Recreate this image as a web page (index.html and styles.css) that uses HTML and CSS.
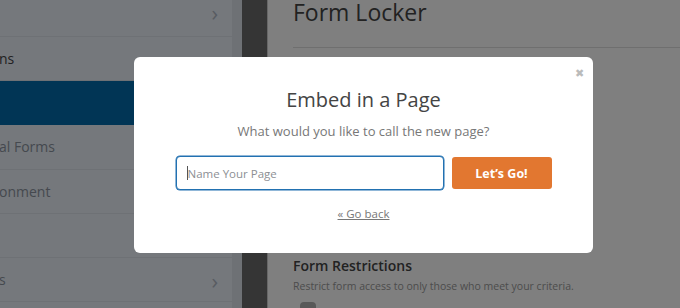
FILE: index.html
```html
<!DOCTYPE html>
<html>
<head>
<meta charset="utf-8">
<link rel="stylesheet" href="styles.css">
</head>
<body>
<div class="page">
  <aside class="sidebar">
    <div class="sb-row first"><span class="sb-label"></span><span class="chev">&#8250;</span></div>
    <div class="sb-row"><span class="sb-label dark">ns</span><span class="chev">&#8250;</span></div>
    <div class="sb-row active"></div>
    <div class="sb-row"><span class="sb-label">al Forms</span></div>
    <div class="sb-row"><span class="sb-label">onment</span></div>
    <div class="sb-row"><span class="sb-label"></span></div>
    <div class="sb-row"><span class="sb-label">s</span><span class="chev">&#8250;</span></div>
  </aside>
  <div class="sb-strip"></div>
  <div class="toggle"></div>
  <main class="main">
    <h1 class="main-title">Form Locker</h1>
    <div class="main-body"></div>
    <h2 class="section-title">Form Restrictions</h2>
    <p class="section-desc">Restrict form access to only those who meet your criteria.</p>
    <div class="toggle-sw"></div>
  </main>
</div>
<div class="overlay"></div>
<div class="modal">
  <span class="close">&#10006;</span>
  <h2 class="modal-title">Embed in a Page</h2>
  <p class="modal-sub">What would you like to call the new page?</p>
  <div class="modal-row">
    <div class="input-wrap">
      <input class="name-input" type="text" placeholder="Name Your Page">
      <span class="caret"></span>
    </div>
    <button class="go-btn">Let’s Go!</button>
  </div>
  <a class="go-back" href="#">« Go back</a>
</div>
</body>
</html>
```
FILE: styles.css
```css
* { box-sizing: border-box; }
html, body { margin: 0; padding: 0; }
body {
  width: 680px;
  height: 308px;
  overflow: hidden;
  font-family: "Open Sans", "Noto Sans", sans-serif;
  background: #fff;
  position: relative;
}
.page {
  display: flex;
  height: 308px;
}
.sidebar {
  width: 232px;
  background: #ebf0f8;
  display: flex;
  flex-direction: column;
  overflow: hidden;
}
.sb-row {
  height: 44.3px;
  flex: 0 0 auto;
  border-bottom: 1px solid #dce2ea;
  display: flex;
  align-items: center;
  justify-content: space-between;
  padding-right: 14px;
  font-size: 14px;
  color: #8a939e;
}
.sb-row.first { height: 37px; align-items: flex-start; }
.sb-row.first .chev { margin-top: 1px; }
.sb-row.active {
  background: #036aab;
  border-bottom: none;
  height: 44px;
}
.sb-label { margin-left: -1px; }
.sb-label.dark { color: #444; }
.chev {
  color: #b0b8c4;
  font-size: 22px;
  line-height: 1;
}
.sb-strip {
  width: 10px;
  background: #dce2ea;
}
.toggle {
  width: 26px;
  background: #6a6a6a;
  border-right: 1px solid #cfcfcf;
}
.main {
  flex: 1;
  padding-left: 25px;
  background: #fff;
}
.main-title {
  margin: 0;
  font-size: 23px;
  font-weight: 400;
  color: #444;
  line-height: 24px;
  height: 48px;
  border-bottom: 1px solid #dedede;
}
.main-body { height: 207px; }
.section-title {
  margin: 0;
  font-size: 14px;
  font-weight: 600;
  color: #444;
  line-height: 22px;
}
.section-desc {
  margin: 0;
  font-size: 10.5px;
  color: #999;
  line-height: 18px;
}
.toggle-sw {
  margin-top: 7px;
  margin-left: 7px;
  width: 16px;
  height: 16px;
  border-radius: 4px;
  background: #b0b0b0;
}
.overlay {
  position: absolute;
  inset: 0;
  background: rgba(0, 0, 0, 0.5);
}
.modal {
  position: absolute;
  left: 134px;
  top: 57px;
  width: 459px;
  height: 196px;
  background: #fff;
  border-radius: 6px;
  display: flex;
  flex-direction: column;
  align-items: center;
  padding-top: 29px;
}
.close {
  position: absolute;
  right: 9px;
  top: 10px;
  font-size: 11px;
  color: #bbb;
  line-height: 1;
}
.modal-title {
  margin: 0;
  font-size: 20px;
  font-weight: 400;
  color: #444;
  line-height: 28px;
}
.modal-sub {
  margin: 7px 0 0;
  font-size: 13px;
  color: #777;
  line-height: 20px;
}
.modal-row {
  display: flex;
  gap: 8px;
  margin-top: 15px;
  align-items: center;
}
.input-wrap { position: relative; }
.name-input {
  width: 268px;
  height: 34px;
  border: 1px solid #2271b1;
  box-shadow: 0 0 0 0.5px #2271b1;
  border-radius: 4px;
  padding: 0 11px;
  font-family: inherit;
  font-size: 11.5px;
  color: #444;
  outline: none;
  display: block;
}
.name-input::placeholder { color: #8c8f94; }
.caret {
  position: absolute;
  left: 11px;
  top: 10px;
  width: 1px;
  height: 14px;
  background: #555;
}
.go-btn {
  width: 100px;
  height: 32px;
  border: none;
  border-radius: 3px;
  background: #e27730;
  color: #fff;
  font-family: inherit;
  font-size: 12.5px;
  font-weight: 700;
  padding: 0;
}
.go-back {
  margin-top: 15px;
  font-size: 11.5px;
  color: #777;
  text-decoration: underline;
  line-height: 18px;
}
```
